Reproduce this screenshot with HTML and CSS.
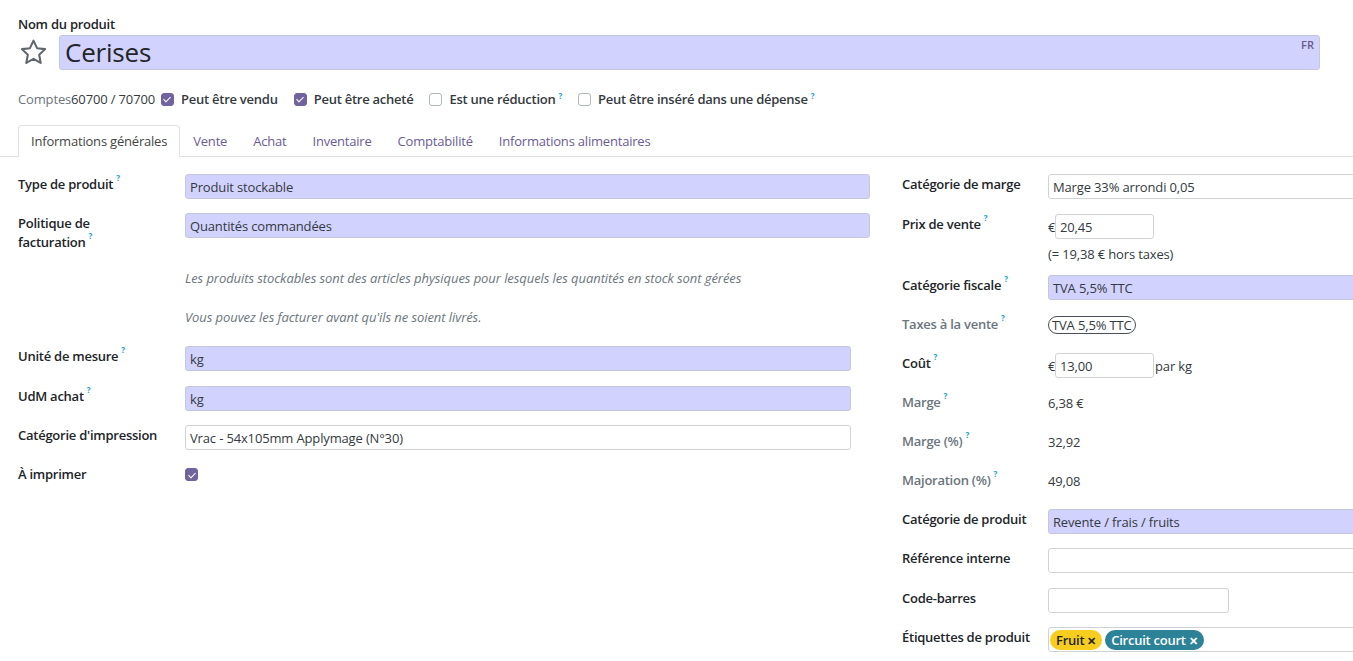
FILE: index.html
```html
<!DOCTYPE html>
<html lang="fr">
<head>
<meta charset="utf-8">
<title>Cerises</title>
<link rel="stylesheet" href="styles.css">
</head>
<body>
<div class="sheet">
  <div class="head">
    <div class="name-label">Nom du produit</div>
    <div class="title-row">
      <svg class="star" viewBox="0 0 24 24" width="29" height="29" aria-hidden="true">
        <polygon points="12,2.2 14.95,8.4 21.6,9.2 16.7,13.9 17.95,20.6 12,17.3 6.05,20.6 7.3,13.9 2.4,9.2 9.05,8.4" fill="none" stroke="#5f656b" stroke-width="1.7" stroke-linejoin="round"/>
      </svg>
      <div class="title-input">Cerises<span class="lang">FR</span></div>
    </div>
    <div class="options">
      <span class="muted">Comptes</span><span class="accounts">60700 / 70700</span>
      <span class="opt"><span class="cb on"></span>Peut être vendu</span>
      <span class="opt"><span class="cb on"></span>Peut être acheté</span>
      <span class="opt"><span class="cb"></span>Est une réduction<sup class="q">?</sup></span>
      <span class="opt"><span class="cb"></span>Peut être inséré dans une dépense<sup class="q">?</sup></span>
    </div>
  </div>

  <div class="tabs">
    <div class="tab active">Informations générales</div>
    <div class="tab">Vente</div>
    <div class="tab">Achat</div>
    <div class="tab">Inventaire</div>
    <div class="tab">Comptabilité</div>
    <div class="tab">Informations alimentaires</div>
  </div>

  <div class="groups">
    <div class="group left">
      <div class="row">
        <div class="lbl">Type de produit<sup class="q">?</sup></div>
        <div class="val"><div class="field req">Produit stockable</div></div>
      </div>
      <div class="row">
        <div class="lbl">Politique de<br>facturation<sup class="q">?</sup></div>
        <div class="val"><div class="field req">Quantités commandées</div></div>
      </div>
      <div class="help">
        <p>Les produits stockables sont des articles physiques pour lesquels les quantités en stock sont gérées</p>
        <p>Vous pouvez les facturer avant qu'ils ne soient livrés.</p>
      </div>
      <div class="row m15">
        <div class="lbl">Unité de mesure<sup class="q">?</sup></div>
        <div class="val"><div class="field req short">kg</div></div>
      </div>
      <div class="row">
        <div class="lbl">UdM achat<sup class="q">?</sup></div>
        <div class="val"><div class="field req short">kg</div></div>
      </div>
      <div class="row">
        <div class="lbl">Catégorie d'impression</div>
        <div class="val"><div class="field short">Vrac - 54x105mm Applymage (N°30)</div></div>
      </div>
      <div class="row imp">
        <div class="lbl">À imprimer</div>
        <div class="val"><span class="cb on solo"></span></div>
      </div>
    </div>

    <div class="group right">
      <div class="row m15">
        <div class="lbl">Catégorie de marge</div>
        <div class="val"><div class="field">Marge 33% arrondi 0,05</div></div>
      </div>
      <div class="row m11">
        <div class="lbl">Prix de vente<sup class="q">?</sup></div>
        <div class="val">
          <div class="money"><span class="cur">€</span><div class="field num">20,45</div></div>
          <div class="note">(= 19,38 € hors taxes)</div>
        </div>
      </div>
      <div class="row m12">
        <div class="lbl">Catégorie fiscale<sup class="q">?</sup></div>
        <div class="val"><div class="field req">TVA 5,5% TTC</div></div>
      </div>
      <div class="row m16 ro-row">
        <div class="lbl ro">Taxes à la vente<sup class="q">?</sup></div>
        <div class="val text"><span class="badge">TVA 5,5% TTC</span></div>
      </div>
      <div class="row m12">
        <div class="lbl">Coût<sup class="q">?</sup></div>
        <div class="val">
          <div class="money"><span class="cur">€</span><div class="field num">13,00</div><span class="unit">par kg</span></div>
        </div>
      </div>
      <div class="row ro-row">
        <div class="lbl ro">Marge<sup class="q">?</sup></div>
        <div class="val text">6,38 €</div>
      </div>
      <div class="row ro-row">
        <div class="lbl ro">Marge (%)<sup class="q">?</sup></div>
        <div class="val text">32,92</div>
      </div>
      <div class="row m16 ro-row">
        <div class="lbl ro">Majoration (%)<sup class="q">?</sup></div>
        <div class="val text">49,08</div>
      </div>
      <div class="row">
        <div class="lbl">Catégorie de produit</div>
        <div class="val"><div class="field req">Revente / frais / fruits</div></div>
      </div>
      <div class="row m15">
        <div class="lbl">Référence interne</div>
        <div class="val"><div class="field"></div></div>
      </div>
      <div class="row">
        <div class="lbl">Code-barres</div>
        <div class="val"><div class="field barcode"></div></div>
      </div>
      <div class="row">
        <div class="lbl">Étiquettes de produit</div>
        <div class="val"><div class="field tags"><span class="tag yellow">Fruit <span class="x">✕</span></span><span class="tag teal">Circuit court <span class="x">✕</span></span></div></div>
      </div>
    </div>
  </div>
</div>
</body>
</html>
```

FILE: styles.css
```css
* { box-sizing: border-box; }
html, body {
  margin: 0;
  padding: 0;
  background: #fff;
  overflow: hidden;
}
body {
  font-family: "Open Sans", "Noto Sans", sans-serif;
  font-size: 13px;
  letter-spacing: -0.15px;
  color: #212529;
  width: 1353px;
  height: 661px;
}
.sheet {
  width: 1353px;
  overflow: hidden;
}
.head {
  padding: 15px 0 0 18px;
}
.name-label {
  font-weight: 600;
  line-height: 18px;
  letter-spacing: -0.25px;
}
.title-row {
  display: flex;
  align-items: center;
  gap: 11px;
  margin-top: 2px;
}
.star {
  display: block;
  margin-left: 1px;
  flex: none;
}
.title-input {
  position: relative;
  width: 1261px;
  height: 35px;
  background: #d2d2ff;
  border: 1px solid #c6c6de;
  border-radius: 3px;
  font-size: 26px;
  line-height: 33px;
  padding-left: 5px;
  color: #212529;
  letter-spacing: -0.2px;
}
.lang {
  position: absolute;
  right: 5px;
  top: 2px;
  font-size: 11px;
  line-height: 14px;
  font-weight: 600;
  letter-spacing: 0;
  color: #6a5a8c;
}
.options {
  display: flex;
  align-items: center;
  margin-top: 19px;
  line-height: 20px;
}
.muted { color: #6c757d; }
.accounts { color: #343a40; margin-right: 6px; }
.opt {
  display: inline-flex;
  align-items: center;
  font-weight: 600;
  letter-spacing: -0.25px;
  color: #343a40;
  margin-right: 16px;
}
.cb {
  display: inline-block;
  flex: none;
  width: 13px;
  height: 13px;
  border: 1px solid #adb5bd;
  border-radius: 3px;
  background: #fff;
  margin-right: 7px;
  position: relative;
}
.cb.on {
  background: #71639e;
  border-color: #71639e;
}
.cb.on::after {
  content: "";
  position: absolute;
  left: 3.5px;
  top: 1.5px;
  width: 3px;
  height: 6px;
  border: solid #fff;
  border-width: 0 1.5px 1.5px 0;
  transform: rotate(45deg);
}
.q {
  color: #1b9fc7;
  font-size: 8px;
  font-weight: 700;
  margin-left: 3px;
  position: relative;
  top: -3px;
  vertical-align: super;
  line-height: 0;
}
.tabs {
  display: flex;
  margin-top: 16px;
  padding-left: 18px;
  border-bottom: 1px solid #dee2e6;
  height: 32px;
}
.tab {
  padding: 0 12px;
  line-height: 31px;
  color: #6b5b95;
  border: 1px solid transparent;
  border-bottom: none;
  letter-spacing: -0.2px;
}
.tab.active {
  color: #444;
  background: #fff;
  border-color: #dee2e6;
  border-radius: 4px 4px 0 0;
  height: 32px;
  padding: 0 12px;
}
.groups {
  display: flex;
  gap: 32px;
  padding: 17px 0 0 18px;
}
.group.left { width: 852px; flex: none; }
.group.right { width: 520px; flex: none; }
.row {
  display: grid;
  grid-template-columns: 167px 1fr;
  margin-bottom: 14px;
}
.right .row { grid-template-columns: 146px 1fr; }
.row.m11 { margin-bottom: 11px; }
.row.m12 { margin-bottom: 12px; }
.row.m15 { margin-bottom: 15px; }
.row.m16 { margin-bottom: 16px; }
.lbl {
  font-weight: 600;
  letter-spacing: -0.25px;
  line-height: 19px;
  padding-top: 1px;
  white-space: nowrap;
  color: #212529;
}
.lbl.ro { color: #6c757d; }
.row.ro-row .lbl { padding-top: 3px; }
.val { min-height: 25px; }
.val.text {
  display: flex;
  align-items: center;
  height: 25px;
  color: #343a40;
}
.field {
  height: 25px;
  border: 1px solid #cfd3d8;
  border-radius: 3px;
  background: #fff;
  padding-left: 4px;
  line-height: 24px;
  color: #343a40;
}
.field.req {
  background: #d2d2ff;
  border-color: #c6c6de;
}
.field.short { width: 666px; }
.field.barcode { width: 181px; }
.help {
  padding: 2px 0 0 167px;
  margin-bottom: 19px;
}
.help p {
  margin: 0 0 19px;
  line-height: 20px;
  font-style: italic;
  letter-spacing: -0.07px;
  color: #6c757d;
}
.help p:last-child { margin-bottom: 0; }
.cb.solo { margin-top: 4px; }
.money {
  display: flex;
  align-items: center;
}
.cur { width: 7px; color: #343a40; }
.field.num { width: 99px; }
.unit { margin-left: 1px; color: #343a40; }
.note {
  margin-top: 5px;
  line-height: 20px;
  color: #343a40;
}
.badge {
  display: inline-block;
  height: 18px;
  line-height: 16px;
  border: 1px solid #495057;
  border-radius: 9px;
  padding: 0 3px;
  color: #343a40;
}
.field.tags {
  display: flex;
  align-items: center;
  gap: 3px;
  padding-left: 1px;
}
.tag {
  display: inline-block;
  height: 20px;
  line-height: 20px;
  border-radius: 10px;
  padding: 0 6px;
  font-weight: 600;
  letter-spacing: -0.25px;
}
.tag .x { font-size: 11px; }
.tag.yellow { background: #f7cd1f; color: #212529; }
.tag.teal { background: #2c8397; color: #fff; }
```
